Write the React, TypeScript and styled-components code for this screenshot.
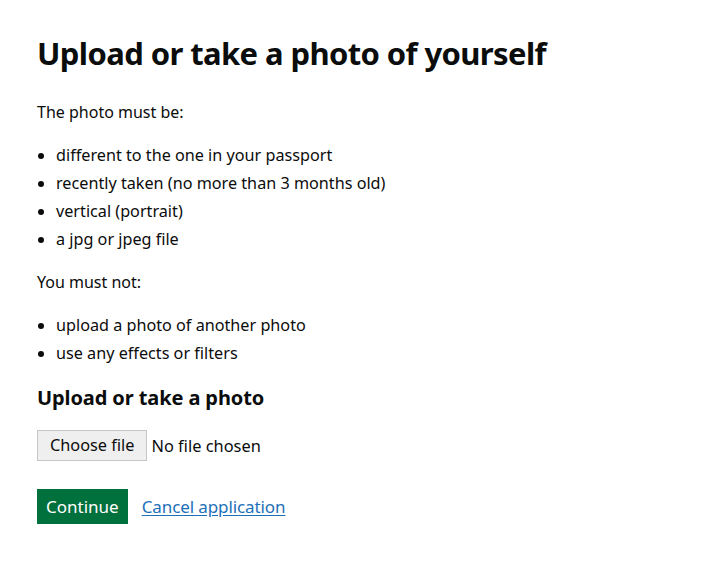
import React, { useState } from "react";
import styled, { createGlobalStyle } from "styled-components";

const Global = createGlobalStyle`
  html, body { margin: 0; padding: 0; background: #ffffff; }
  body { font-family: "Noto Sans", "Liberation Sans", sans-serif; color: #0b0c0c; }
`;

const Main = styled.main`
  padding: 33px 37px 0 37px;
`;

const H1 = styled.h1`
  margin: 0 0 25px 0;
  font-size: 31px;
  line-height: 40px;
  font-weight: 700;
  letter-spacing: -0.6px;
`;

const P = styled.p`
  margin: 0 0 15px 0;
  font-size: 16px;
  line-height: 28px;
`;

const List = styled.ul`
  margin: 0 0 15px 0;
  padding-left: 19px;
  font-size: 16.2px;
  line-height: 28px;
`;

const Item = styled.li`
  margin: 0;
`;

const H2 = styled.h2`
  margin: 17px 0 18px 0;
  font-size: 20px;
  line-height: 28px;
  font-weight: 700;
  letter-spacing: -0.1px;
`;

const FileRow = styled.div`
  display: flex;
  align-items: center;
  gap: 4px;
  margin: 0 0 28px 0;
  font-size: 16.4px;
`;

const HiddenInput = styled.input`
  position: absolute;
  width: 1px;
  height: 1px;
  opacity: 0;
  overflow: hidden;
`;

const ChooseButton = styled.label`
  display: inline-block;
  font-size: 16.3px;
  line-height: 21px;
  padding: 4px 12px;
  background: #efefef;
  border: 1px solid #c6c6c6;
  color: #0b0c0c;
  cursor: pointer;
`;

const FileStatus = styled.span`
  color: #0b0c0c;
`;

const Actions = styled.div`
  display: flex;
  align-items: center;
  gap: 14px;
`;

const Button = styled.button`
  font-family: inherit;
  font-size: 17px;
  line-height: 22px;
  color: #ffffff;
  background: #00703c;
  border: 0;
  border-radius: 0;
  padding: 7px 9px 6px;
  box-shadow: 0 2px 0 #002d18;
  cursor: pointer;
`;

const Link = styled.a`
  font-size: 17px;
  color: #1d70b8;
  text-decoration: underline;
  text-underline-offset: 2px;
  letter-spacing: -0.1px;
`;

export default function App() {
  const [fileName, setFileName] = useState<string | null>(null);
  return (
    <>
      <Global />
      <Main>
        <H1>Upload or take a photo of yourself</H1>
        <P>The photo must be:</P>
        <List>
          <Item>different to the one in your passport</Item>
          <Item>recently taken (no more than 3 months old)</Item>
          <Item>vertical (portrait)</Item>
          <Item>a jpg or jpeg file</Item>
        </List>
        <P>You must not:</P>
        <List>
          <Item>upload a photo of another photo</Item>
          <Item>use any effects or filters</Item>
        </List>
        <H2>Upload or take a photo</H2>
        <FileRow>
          <HiddenInput
            id="photo"
            type="file"
            accept="image/jpeg"
            onChange={(e) => setFileName(e.target.files?.[0]?.name ?? null)}
          />
          <ChooseButton htmlFor="photo">Choose file</ChooseButton>
          <FileStatus>{fileName ?? "No file chosen"}</FileStatus>
        </FileRow>
        <Actions>
          <Button type="button">Continue</Button>
          <Link href="#">Cancel application</Link>
        </Actions>
      </Main>
    </>
  );
}
